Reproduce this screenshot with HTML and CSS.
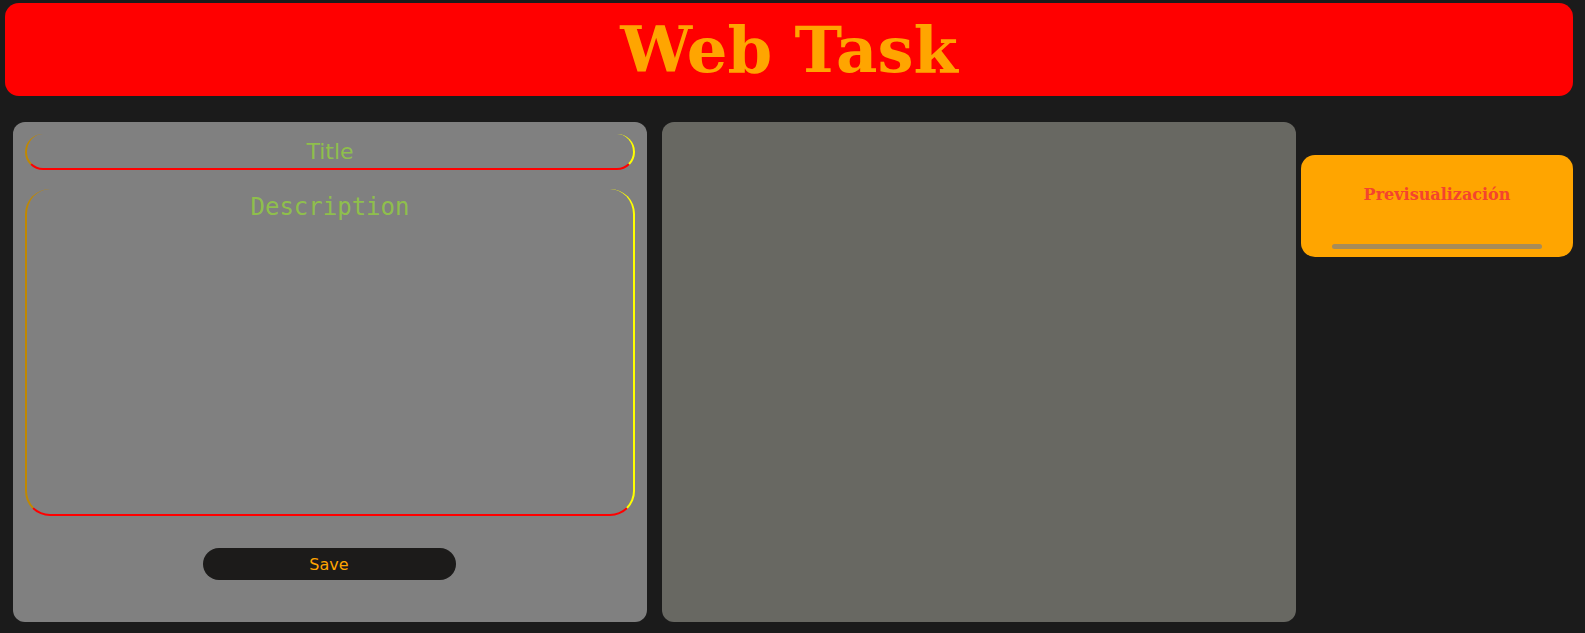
FILE: index.html
```html
<!DOCTYPE html>
<html>
<head>
  <title>Web Task</title>
  <link rel="stylesheet" href="styles.css">
</head>
<body>
  <header class="top">
    <h1>Web Task</h1>
  </header>
  <main class="board">
    <section class="editor">
      <input type="text" class="field-title" placeholder="Title">
      <textarea class="field-desc" placeholder="Description"></textarea>
      <button class="save">Save</button>
    </section>
    <section class="tasks"></section>
    <aside class="preview">
      <h3>Previsualización</h3>
      <div class="preview-bar"></div>
    </aside>
  </main>
</body>
</html>
```
FILE: styles.css
```css
body {
  margin: 0;
  padding: 3px 12px 0 5px;
  background-color: #1b1b1b;
  font-family: "DejaVu Sans", sans-serif;
}
.top {
  height: 93px;
  background-color: #ff0000;
  border-radius: 14px;
  display: flex;
  align-items: center;
  justify-content: center;
}
.top h1 {
  margin: 0;
  font-family: "DejaVu Serif", serif;
  font-size: 64px;
  font-weight: bold;
  color: #ffa500;
}
.board {
  display: flex;
  align-items: flex-start;
  margin-top: 26px;
  padding-left: 8px;
}
.editor {
  width: 634px;
  height: 500px;
  box-sizing: border-box;
  padding: 12px;
  background-color: #808080;
  border-radius: 12px;
  display: flex;
  flex-direction: column;
}
.field-title,
.field-desc {
  box-sizing: border-box;
  width: 100%;
  background: transparent;
  border-top: none;
  border-left: 2px solid #c08800;
  border-right: 2px solid #ffff00;
  border-bottom: 2px solid #ff0000;
  text-align: center;
  color: #8bc34a;
  outline: none;
}
.field-title {
  height: 36px;
  padding-top: 2px;
  border-radius: 18px;
  font-family: "DejaVu Sans", sans-serif;
  font-size: 22px;
}
.field-desc {
  height: 327px;
  margin-top: 19px;
  border-radius: 25px;
  resize: none;
  padding-top: 4px;
  font-family: "DejaVu Sans Mono", monospace;
  font-size: 24px;
}
.field-title::placeholder,
.field-desc::placeholder {
  color: #8fbf4c;
}
.save {
  align-self: center;
  width: 253px;
  height: 32px;
  margin-top: 32px;
  margin-right: 2px;
  background-color: #1c1b1a;
  color: #ffa500;
  border: none;
  border-radius: 16px;
  font-family: "DejaVu Sans", sans-serif;
  font-size: 16px;
  cursor: pointer;
}
.tasks {
  width: 634px;
  height: 500px;
  margin-left: 15px;
  background-color: #686862;
  border-radius: 12px;
}
.preview {
  width: 272px;
  height: 102px;
  box-sizing: border-box;
  margin-top: 33px;
  margin-left: 5px;
  padding: 0 31px;
  background-color: #ffa500;
  border-radius: 14px;
  display: flex;
  flex-direction: column;
  align-items: stretch;
}
.preview h3 {
  margin: 30px 0 0;
  text-align: center;
  font-family: "DejaVu Serif", serif;
  font-size: 16px;
  color: #f4442e;
}
.preview-bar {
  margin-top: auto;
  margin-bottom: 8px;
  height: 5px;
  border-radius: 3px;
  background-color: #a88c58;
}
```
